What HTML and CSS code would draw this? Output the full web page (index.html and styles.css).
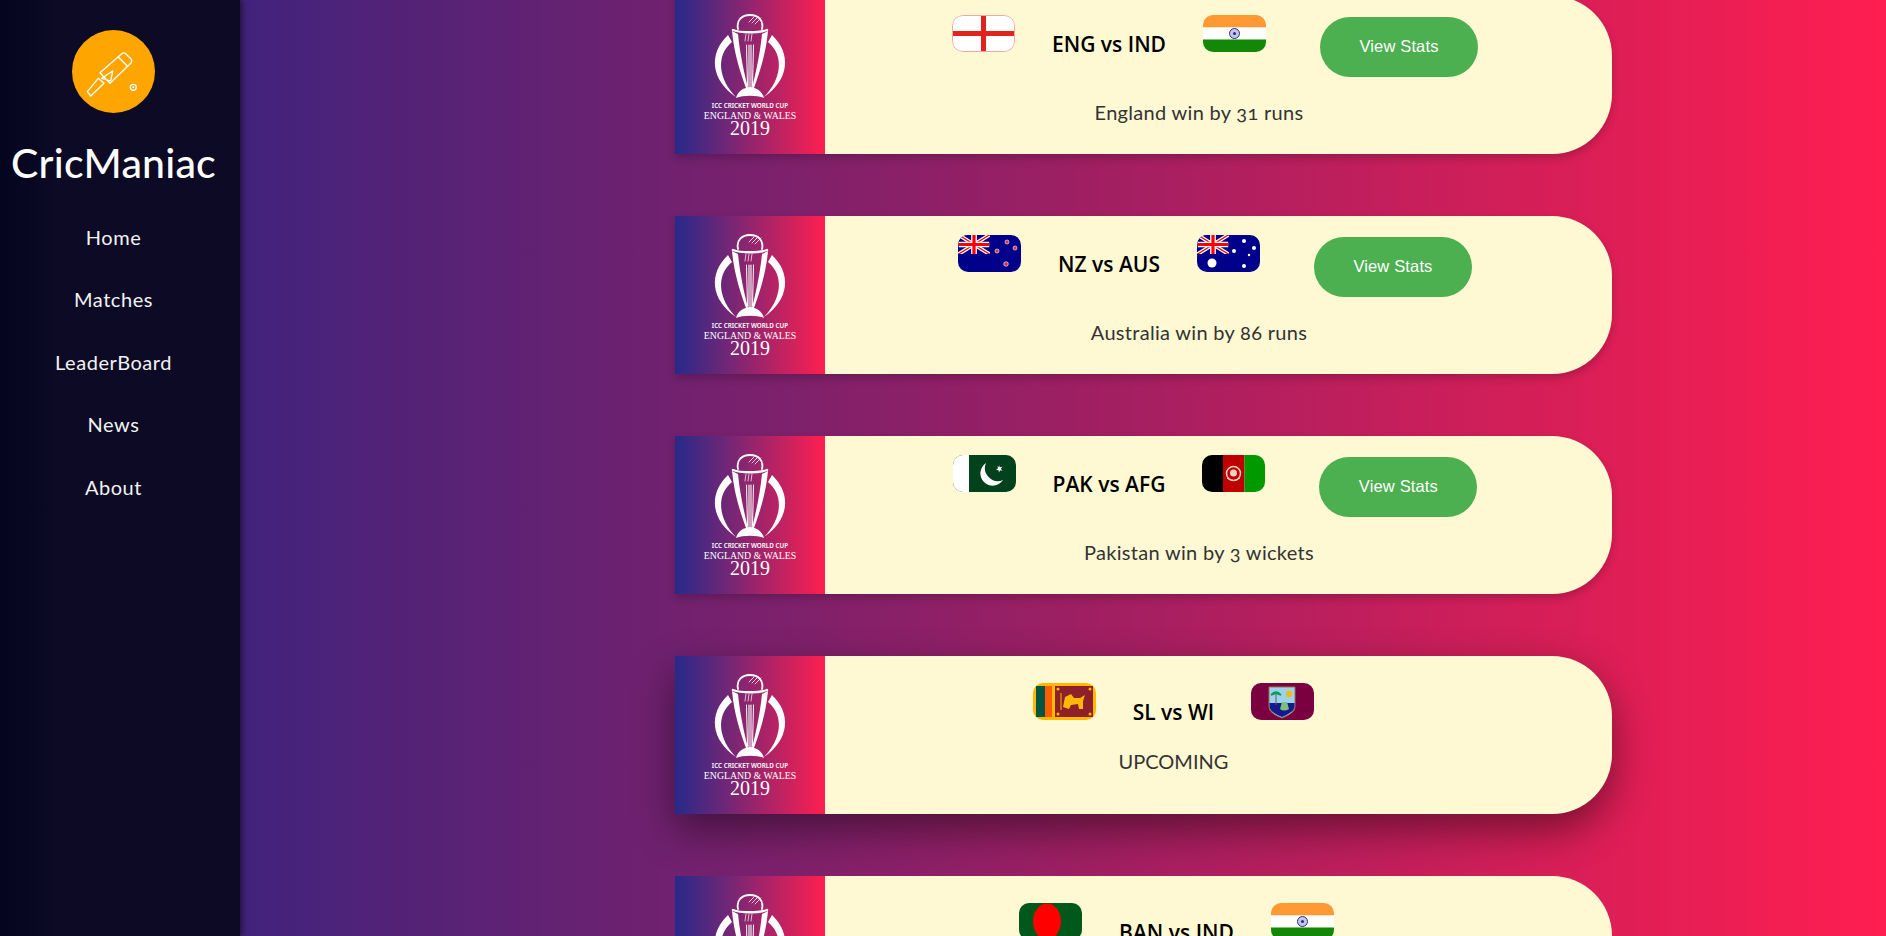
FILE: index.html
```html
<!DOCTYPE html>
<html lang="en">
<head>
<meta charset="utf-8">
<title>CricManiac</title>
<link rel="stylesheet" href="styles.css">
</head>
<body>
<svg class="defs" width="0" height="0" aria-hidden="true">
  <defs>
    <symbol id="logo" viewBox="0 0 150 158">
      <g fill="none" stroke="#fff" stroke-linecap="round">
        <path d="M63 33C61 24 67 19 75 19S89 24 87 33" stroke-width="1.800"/>
        <path d="M77 27l6-6M80 28l6-6M74 26l5-5" stroke-width=".8"/>
        <path d="M58 34C66 37 84 37 92 34" stroke-width="2.400"/>
        <path d="M74 49V92M76 49V92" stroke-width="1.100"/>
        <path d="M71.500 49L72.500 90M78.500 49L77.500 90" stroke-width="1"/>
        <path d="M71 38l-1 7M74 38l-1 7M77 38l-1 7" stroke-width=".7"/>
      </g>
      <g fill="#fff">
        <path d="M57 35C59 58 66 78 71 92L73 92C69 76 65 58 63 38Z"/>
        <path d="M93 35C91 58 84 78 79 92L77 92C81 76 85 58 87 38Z"/>
        <path d="M61 102C63 95 68 92 75 91C82 92 87 95 89 102C82 99 68 99 61 102Z"/>
        <path d="M53 39C33 58 36 84 61 101C44 84 40 60 57 46Z"/>
        <path d="M97 39C117 58 114 84 89 101C106 84 110 60 93 46Z"/>
      </g>
      <text class="logo-small" x="75" y="112" text-anchor="middle">ICC CRICKET WORLD CUP</text>
      <text class="logo-mid" x="75" y="123" text-anchor="middle">ENGLAND &amp; WALES</text>
      <text class="logo-year" x="75" y="139" text-anchor="middle">2019</text>
    </symbol>
    <symbol id="jack" viewBox="0 0 32 20">
      <rect width="32" height="20" fill="#00008b"/>
      <path d="M0 0L32 20M32 0L0 20" stroke="#fff" stroke-width="4"/>
      <path d="M0 0L32 20M32 0L0 20" stroke="#f00" stroke-width="1.400"/>
      <path d="M16 0V20M0 10H32" stroke="#fff" stroke-width="6"/>
      <path d="M16 0V20M0 10H32" stroke="#f00" stroke-width="3.400"/>
    </symbol>
  </defs>
</svg>
<div class="app">
  <aside class="sidebar">
    <div class="badge">
      <svg class="badge-icon" viewBox="0 0 83 83">
        <g fill="none" stroke="#fff" stroke-width="1.300" stroke-linejoin="round">
          <path d="M50 23.500Q52 22 54 24L59 29Q60.500 31 59 33L38 53.300L28 42.700Z"/>
          <path d="M46.300 27L55.700 36.500"/>
          <path d="M26.300 48.300L32 53.300L18.700 66L15.300 61.700Z"/>
          <path d="M40.700 41L29.700 48.300L38.700 51Z"/>
          <circle cx="61.300" cy="57.300" r="3"/>
        </g>
        <circle cx="61.300" cy="57.300" r="1" fill="#fff"/>
      </svg>
    </div>
    <h1 class="brand">CricManiac</h1>
    <nav class="nav">
      <a class="nav-link" href="#">Home</a>
      <a class="nav-link" href="#">Matches</a>
      <a class="nav-link" href="#">LeaderBoard</a>
      <a class="nav-link" href="#">News</a>
      <a class="nav-link" href="#">About</a>
    </nav>
  </aside>
  <main class="main">
    <article class="card">
      <div class="thumb"><svg class="logo"><use href="#logo"/></svg></div>
      <div class="body">
        <div class="teams">
          <svg class="flag" viewBox="0 0 63 37"><rect width="63" height="37" fill="#fff"/><path d="M31.500 0V37M0 18.500H63" stroke="#e0231c" stroke-width="5"/><rect x=".5" y=".5" width="62" height="36" rx="10" fill="none" stroke="#f0a8a0"/></svg>
          <span class="title">ENG vs IND</span>
          <svg class="flag" viewBox="0 0 63 37"><rect width="63" height="12.500" fill="#f93"/><rect y="12.500" width="63" height="12" fill="#fff"/><rect y="24.500" width="63" height="12.500" fill="#138808"/><circle cx="31.500" cy="18.500" r="5" fill="#c5c5e5" stroke="#2c2c8c" stroke-width="1"/><circle cx="31.500" cy="18.500" r="1.500" fill="#2c2c8c"/></svg>
          <a class="btn" href="#">View Stats</a>
        </div>
        <p class="result">England win by <span class="num">31</span> runs</p>
      </div>
    </article>
    <article class="card">
      <div class="thumb"><svg class="logo"><use href="#logo"/></svg></div>
      <div class="body">
        <div class="teams">
          <svg class="flag" viewBox="0 0 63 37"><rect width="63" height="37" fill="#00008b"/><use href="#jack" width="32" height="19"/><g fill="#e03040" stroke="#fff" stroke-width=".6"><circle cx="49" cy="7" r="2"/><circle cx="39" cy="16" r="2"/><circle cx="57" cy="13" r="2"/><circle cx="48" cy="29" r="2.300"/></g></svg>
          <span class="title">NZ vs AUS</span>
          <svg class="flag" viewBox="0 0 63 37"><rect width="63" height="37" fill="#00008b"/><use href="#jack" width="32" height="19"/><g fill="#fff"><circle cx="15" cy="28" r="4.500"/><circle cx="47" cy="6" r="2"/><circle cx="37" cy="16" r="2"/><circle cx="57" cy="13" r="2"/><circle cx="52" cy="20" r="1.200"/><circle cx="47" cy="31" r="2"/></g></svg>
          <a class="btn" href="#">View Stats</a>
        </div>
        <p class="result">Australia win by <span class="num">86</span> runs</p>
      </div>
    </article>
    <article class="card">
      <div class="thumb"><svg class="logo"><use href="#logo"/></svg></div>
      <div class="body">
        <div class="teams">
          <svg class="flag" viewBox="0 0 63 37"><rect width="63" height="37" fill="#01411c"/><rect width="16" height="37" fill="#fff"/><path d="M33 8A12.300 12.300 0 1 0 50 25A13 13 0 0 1 33 8Z" fill="#fff"/><path d="M46 10l1 2.200 2.400-.4-1.500 2 1.500 2-2.400-.5-1 2.200-.6-2.400-2.400-.4 2-1.400-.5-2.400 1.800 1.400Z" fill="#fff"/></svg>
          <span class="title">PAK vs AFG</span>
          <svg class="flag" viewBox="0 0 63 37"><rect width="21" height="37" fill="#000"/><rect x="21" width="21.500" height="37" fill="#be0000"/><rect x="42.500" width="20.500" height="37" fill="#090"/><circle cx="31.500" cy="18.500" r="7" fill="none" stroke="#f4d0c0" stroke-width="1.500"/><circle cx="31.500" cy="18" r="3.500" fill="#f4d0c0"/><path d="M25 23Q31.500 28 38 23" fill="none" stroke="#f4d0c0"/></svg>
          <a class="btn" href="#">View Stats</a>
        </div>
        <p class="result">Pakistan win by <span class="num">3</span> wickets</p>
      </div>
    </article>
    <article class="card card-open">
      <div class="thumb"><svg class="logo"><use href="#logo"/></svg></div>
      <div class="body">
        <div class="teams">
          <svg class="flag" viewBox="0 0 63 37"><rect width="63" height="37" fill="#ffb700"/><rect x="3" y="3" width="9" height="31" fill="#005641"/><rect x="12" y="3" width="7" height="31" fill="#ff5b00"/><rect x="22" y="3" width="38" height="31" fill="#8d2029"/><path d="M30 24L32 14L38 11L41 15L47 15L52 12L50 18L50 26L46 26L45 21L38 22L36 26L33 25Z" fill="#ffb700"/><path d="M28 10V27" stroke="#ffb700"/><g fill="#ffb700"><circle cx="25" cy="6" r="1.500"/><circle cx="57" cy="6" r="1.500"/><circle cx="25" cy="31" r="1.500"/><circle cx="57" cy="31" r="1.500"/></g></svg>
          <span class="title">SL vs WI</span>
          <svg class="flag" viewBox="0 0 63 37"><rect width="63" height="37" fill="#7b0041"/><path d="M18 4H44V24Q44 30 31 35Q18 30 18 24Z" fill="#9cd3ec" stroke="#a0704a"/><path d="M18.500 20H43.500V24Q43 29 31 34Q19 29 18.500 24Z" fill="#141a8c"/><path d="M29 26L31 19H36L38 26Q33 29 29 26Z" fill="#7dc07a"/><circle cx="38" cy="11" r="3.200" fill="#f5b81a"/><path d="M25 22V11" stroke="#7a5a30"/><path d="M20 12Q25 6 30 12Q25 10 25 11Q25 10 20 12Z" fill="#0a9a5a" stroke="#0a9a5a" stroke-width="1.500"/></svg>
        </div>
        <p class="result">UPCOMING</p>
      </div>
    </article>
    <article class="card card-open">
      <div class="thumb"><svg class="logo"><use href="#logo"/></svg></div>
      <div class="body">
        <div class="teams">
          <svg class="flag" viewBox="0 0 63 37"><rect width="63" height="37" fill="#00581b"/><ellipse cx="28" cy="18.500" rx="14" ry="18" fill="#f00"/></svg>
          <span class="title">BAN vs IND</span>
          <svg class="flag" viewBox="0 0 63 37"><rect width="63" height="12.500" fill="#f93"/><rect y="12.500" width="63" height="12" fill="#fff"/><rect y="24.500" width="63" height="12.500" fill="#138808"/><circle cx="31.500" cy="18.500" r="5" fill="#c5c5e5" stroke="#2c2c8c" stroke-width="1"/><circle cx="31.500" cy="18.500" r="1.500" fill="#2c2c8c"/></svg>
        </div>
      </div>
    </article>
  </main>
</div>
</body>
</html>
```
FILE: styles.css
```css
* { box-sizing: border-box; }
html, body { margin: 0; height: 100%; }
body { overflow: hidden; font-family: "Lato", "Noto Sans", sans-serif; }
.defs { display: block; height: 0; }
.app { display: flex; height: 936px; overflow: hidden; }

.sidebar {
  flex: 0 0 240px;
  padding: 30px 13px 0 0;
  display: flex;
  flex-direction: column;
  align-items: center;
  background: linear-gradient(to right, #05051f 0, #0c0a24 60px);
  box-shadow: 2px 0 6px rgba(0, 0, 0, .55);
  position: relative;
  z-index: 2;
}
.badge { width: 83px; height: 83px; border-radius: 50%; background: #ffa500; }
.badge-icon { display: block; width: 83px; height: 83px; }
.brand { margin: 24px 0 0; font-size: 41px; line-height: 52px; font-weight: 500; color: #fff; letter-spacing: .2px; white-space: nowrap; }
.nav { margin-top: 35.700px; display: flex; flex-direction: column; align-items: center; gap: 38.500px; }
.nav-link { font-size: 20px; line-height: 24px; color: #f2f2f2; text-decoration: none; letter-spacing: .55px; }

.main {
  flex: 1;
  padding-left: 435px;
  display: flex;
  flex-direction: column;
  gap: 62px;
  background: linear-gradient(to right, #41237c 0, #a01f62 52%, #ff1e50 100%);
}
.card {
  flex: 0 0 158px;
  width: 937px;
  display: flex;
  background: #fff9d3;
  border-radius: 0 60px 60px 0;
  box-shadow: 0 4px 8px rgba(0, 0, 0, .2);
}
.card:first-child { margin-top: -4px; }
.card:nth-child(4) { box-shadow: 0 16px 40px rgba(0, 0, 0, .45); }
.card:nth-child(5) { box-shadow: none; }
.thumb { flex: 0 0 150px; height: 158px; background: linear-gradient(to right, #262a8a 0, #ff1f50 100%); }
.logo { display: block; width: 150px; height: 158px; }
.logo-small { font: 600 6.300px "Noto Sans", sans-serif; fill: #fff; }
.logo-mid { font: 500 9.800px "Liberation Serif", serif; fill: #fff; }
.logo-year { font: 500 20px "Liberation Serif", serif; fill: #fff; }

.body { flex: 1; display: flex; flex-direction: column; align-items: center; padding: 19px 7px 0 0; }
.card-open .body { padding: 27px 90px 0 0; }
.card:nth-child(5) .body { padding-right: 84px; }
.teams { display: flex; align-items: flex-start; gap: 37px; }
.flag { display: block; width: 63px; height: 37px; border-radius: 10px; }
.title { margin-top: 15px; font: 600 21px/29px "Open Sans", sans-serif; color: #000; white-space: nowrap; }
.btn {
  margin: 2px 0 0 17px;
  width: 158px;
  height: 60px;
  border-radius: 30px;
  background: #4caf50;
  color: #fff;
  font: 16.500px/58px "Liberation Sans", sans-serif;
  letter-spacing: .15px;
  text-align: center;
  text-decoration: none;
}
.result { margin: 20.500px 32px 0 0; font-size: 20px; line-height: 29px; font-weight: 400; color: #333; letter-spacing: .3px; }
.card-open .result { margin: 20px 0 0; letter-spacing: 0; }
.num { font-variant-numeric: oldstyle-nums; }
```
